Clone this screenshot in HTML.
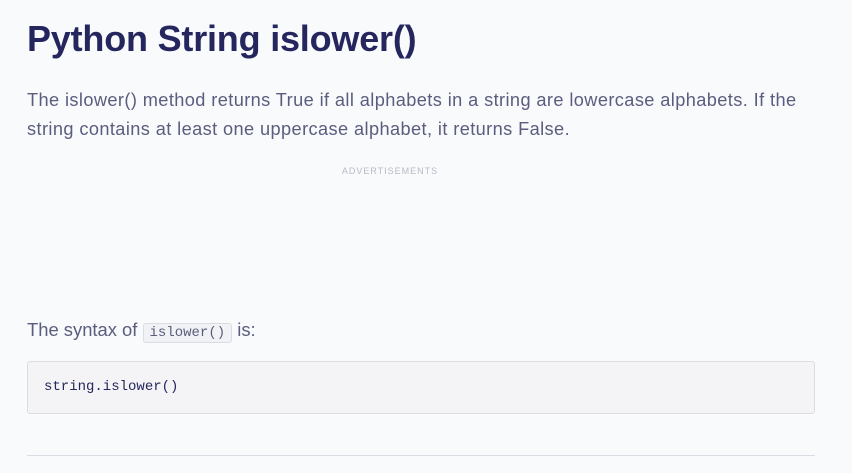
<!DOCTYPE html>
<html><head><style>
html,body{margin:0;background:#f9fafc;width:852px;height:473px;overflow:hidden;font-family:"Liberation Sans",sans-serif}
h1{position:absolute;left:27px;top:18px;margin:0;font-size:36px;font-weight:bold;color:#25265e;letter-spacing:-0.2px}
.p{position:absolute;left:27px;top:86px;width:800px;font-size:18.2px;letter-spacing:0.4px;line-height:29px;color:#5b5d7e;white-space:nowrap}
.ad{position:absolute;left:0;width:780px;top:166px;text-align:center;font-size:9px;letter-spacing:1px;color:#b7b9c6}
.s{position:absolute;left:27px;top:319px;font-size:18.4px;color:#5b5d7e}
code.i{font-family:"Liberation Mono",monospace;font-size:14px;background:#f1f2f5;border:1px solid #dcdde4;border-radius:3px;padding:1px 6px;color:#5b5d7e}
.pre{position:absolute;left:27px;top:361px;width:788px;height:53px;background:#f4f4f6;border:1px solid #dcdde4;border-radius:3px;box-sizing:border-box}
.pre span{position:absolute;left:16px;top:17px;font-family:"Liberation Mono",monospace;font-size:14px;color:#25265e}
.hr{position:absolute;left:27px;top:455px;width:788px;height:1px;background:#dcdde4}
</style></head><body>
<h1>Python String islower()</h1>
<div class="p">The islower() method returns True if all alphabets in a string are lowercase alphabets. If the<br>string contains at least one uppercase alphabet, it returns False.</div>
<div class="ad">ADVERTISEMENTS</div>
<div class="s">The syntax of <code class="i">islower()</code> is:</div>
<div class="pre"><span>string.islower()</span></div>
<div class="hr"></div>
</body></html>
